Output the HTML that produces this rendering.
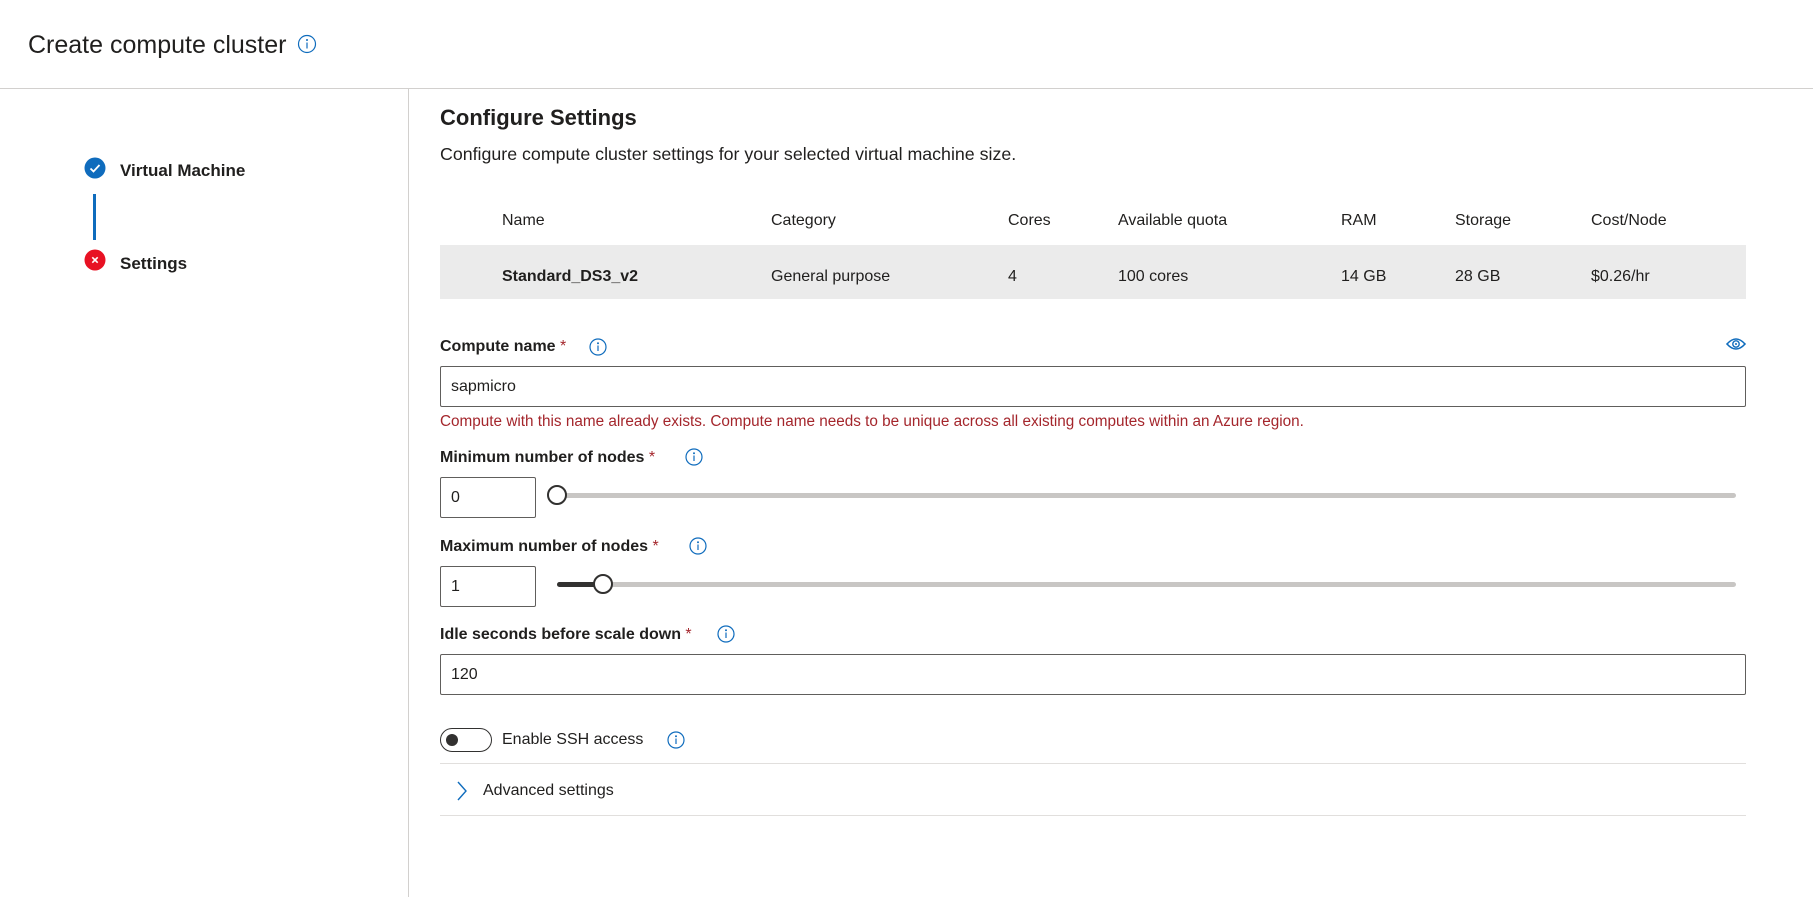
<!DOCTYPE html>
<html><head><meta charset="utf-8"><style>
*{box-sizing:border-box;margin:0;padding:0}
body{width:1813px;height:897px;background:#fff;font-family:"Liberation Sans",sans-serif;color:#201f1e;position:relative;overflow:hidden}
.a{position:absolute;white-space:nowrap}
.lbl{font-size:16px;font-weight:bold;line-height:20px}
.req{color:#a4262c;font-weight:normal}
.inp{position:absolute;border:1px solid #605e5c;border-radius:2px;background:#fff;font-size:16px;padding-left:10px;display:flex;align-items:center}
.track{position:absolute;height:5px;background:#c8c6c4;border-radius:3px}
.thumb{position:absolute;width:20px;height:20px;border:2px solid #323130;border-radius:50%;background:#fff}
.th{font-size:16px;line-height:20px}
</style></head><body>
<div class="a" style="left:28px;top:29px;font-size:25px;line-height:32px">Create compute cluster</div>
<svg class="a" style="left:297px;top:34px" width="20" height="20" viewBox="0 0 20 20"><circle cx="10" cy="10" r="8.5" fill="none" stroke="#0f6cbd" stroke-width="1.2"/><circle cx="10" cy="6" r="1" fill="#0f6cbd"/><rect x="9.4" y="8.5" width="1.2" height="6" fill="#0f6cbd"/></svg>
<div class="a" style="left:0;top:88px;width:1813px;height:1px;background:#d2d0ce"></div>
<div class="a" style="left:408px;top:89px;width:1px;height:808px;background:#d2d0ce"></div>

<svg class="a" style="left:84px;top:157px" width="22" height="22" viewBox="0 0 22 22"><circle cx="11" cy="11" r="10.5" fill="#0f6cbd"/><path d="M6.5 11.5l3 3 6-6.5" fill="none" stroke="#fff" stroke-width="1.8"/></svg>
<div class="a" style="left:120px;top:161px;font-size:17px;font-weight:bold;line-height:20px">Virtual Machine</div>
<div class="a" style="left:93px;top:194px;width:3px;height:46px;background:#0f6cbd"></div>
<svg class="a" style="left:84px;top:249px" width="22" height="22" viewBox="0 0 22 22"><circle cx="11" cy="11" r="10.5" fill="#e81123"/><path d="M8.3 8.3l5.4 5.4M13.7 8.3l-5.4 5.4" stroke="#fff" stroke-width="1.6"/></svg>
<div class="a" style="left:120px;top:254px;font-size:17px;font-weight:bold;line-height:20px">Settings</div>

<div class="a" style="left:440px;top:104px;font-size:22px;font-weight:bold;line-height:28px">Configure Settings</div>
<div class="a" style="left:440px;top:144px;font-size:17.8px;line-height:20px">Configure compute cluster settings for your selected virtual machine size.</div>

<div class="a th" style="left:502px;top:211px">Name</div>
<div class="a th" style="left:771px;top:211px">Category</div>
<div class="a th" style="left:1008px;top:211px">Cores</div>
<div class="a th" style="left:1118px;top:211px">Available quota</div>
<div class="a th" style="left:1341px;top:211px">RAM</div>
<div class="a th" style="left:1455px;top:211px">Storage</div>
<div class="a th" style="left:1591px;top:211px">Cost/Node</div>
<div class="a" style="left:440px;top:245px;width:1306px;height:54px;background:#ebebeb"></div>
<div class="a th" style="left:502px;top:267px;font-weight:bold">Standard_DS3_v2</div>
<div class="a th" style="left:771px;top:267px">General purpose</div>
<div class="a th" style="left:1008px;top:267px">4</div>
<div class="a th" style="left:1118px;top:267px">100 cores</div>
<div class="a th" style="left:1341px;top:267px">14 GB</div>
<div class="a th" style="left:1455px;top:267px">28 GB</div>
<div class="a th" style="left:1591px;top:267px">$0.26/hr</div>

<div class="a lbl" style="left:440px;top:337px">Compute name <span class="req">*</span></div>
<svg class="a" style="left:588px;top:337px" width="20" height="20" viewBox="0 0 20 20"><circle cx="10" cy="10" r="8" fill="none" stroke="#0f6cbd" stroke-width="1.2"/><circle cx="10" cy="6.3" r="1" fill="#0f6cbd"/><rect x="9.4" y="8.5" width="1.2" height="5.5" fill="#0f6cbd"/></svg>
<svg class="a" style="left:1726px;top:337px" width="20" height="14" viewBox="0 0 20 14"><path d="M1 7Q10 -3 19 7Q10 17 1 7Z" fill="none" stroke="#0f6cbd" stroke-width="1.6"/><circle cx="10" cy="7" r="3.2" fill="none" stroke="#0f6cbd" stroke-width="1.4"/><circle cx="10" cy="7" r="1" fill="#0f6cbd"/></svg>
<div class="inp" style="left:440px;top:366px;width:1306px;height:41px">sapmicro</div>
<div class="a" style="left:440px;top:413px;font-size:15.3px;color:#a4262c;line-height:18px">Compute with this name already exists. Compute name needs to be unique across all existing computes within an Azure region.</div>

<div class="a lbl" style="left:440px;top:448px">Minimum number of nodes <span class="req">*</span></div>
<svg class="a" style="left:684px;top:447px" width="20" height="20" viewBox="0 0 20 20"><circle cx="10" cy="10" r="8" fill="none" stroke="#0f6cbd" stroke-width="1.2"/><circle cx="10" cy="6.3" r="1" fill="#0f6cbd"/><rect x="9.4" y="8.5" width="1.2" height="5.5" fill="#0f6cbd"/></svg>
<div class="inp" style="left:440px;top:477px;width:96px;height:41px">0</div>
<div class="track" style="left:557px;top:493px;width:1179px"></div>
<div class="thumb" style="left:547px;top:485px"></div>

<div class="a lbl" style="left:440px;top:537px">Maximum number of nodes <span class="req">*</span></div>
<svg class="a" style="left:688px;top:536px" width="20" height="20" viewBox="0 0 20 20"><circle cx="10" cy="10" r="8" fill="none" stroke="#0f6cbd" stroke-width="1.2"/><circle cx="10" cy="6.3" r="1" fill="#0f6cbd"/><rect x="9.4" y="8.5" width="1.2" height="5.5" fill="#0f6cbd"/></svg>
<div class="inp" style="left:440px;top:566px;width:96px;height:41px">1</div>
<div class="track" style="left:557px;top:582px;width:1179px"></div>
<div class="track" style="left:557px;top:582px;width:46px;background:#323130"></div>
<div class="thumb" style="left:593px;top:574px"></div>

<div class="a lbl" style="left:440px;top:625px">Idle seconds before scale down <span class="req">*</span></div>
<svg class="a" style="left:716px;top:624px" width="20" height="20" viewBox="0 0 20 20"><circle cx="10" cy="10" r="8" fill="none" stroke="#0f6cbd" stroke-width="1.2"/><circle cx="10" cy="6.3" r="1" fill="#0f6cbd"/><rect x="9.4" y="8.5" width="1.2" height="5.5" fill="#0f6cbd"/></svg>
<div class="inp" style="left:440px;top:654px;width:1306px;height:41px">120</div>

<div class="a" style="left:440px;top:728px;width:52px;height:24px;border:1px solid #323130;border-radius:12px"></div>
<div class="a" style="left:446px;top:734px;width:12px;height:12px;border-radius:50%;background:#323130"></div>
<div class="a" style="left:502px;top:730px;font-size:16px;line-height:20px">Enable SSH access</div>
<svg class="a" style="left:666px;top:730px" width="20" height="20" viewBox="0 0 20 20"><circle cx="10" cy="10" r="8" fill="none" stroke="#0f6cbd" stroke-width="1.2"/><circle cx="10" cy="6.3" r="1" fill="#0f6cbd"/><rect x="9.4" y="8.5" width="1.2" height="5.5" fill="#0f6cbd"/></svg>
<div class="a" style="left:440px;top:763px;width:1306px;height:1px;background:#e1dfdd"></div>
<svg class="a" style="left:455px;top:780px" width="14" height="22" viewBox="0 0 14 22"><path d="M3 2l8 9-8 9" fill="none" stroke="#0f6cbd" stroke-width="1.4"/></svg>
<div class="a" style="left:483px;top:781px;font-size:16px;line-height:20px">Advanced settings</div>
<div class="a" style="left:440px;top:815px;width:1306px;height:1px;background:#e1dfdd"></div>
</body></html>
